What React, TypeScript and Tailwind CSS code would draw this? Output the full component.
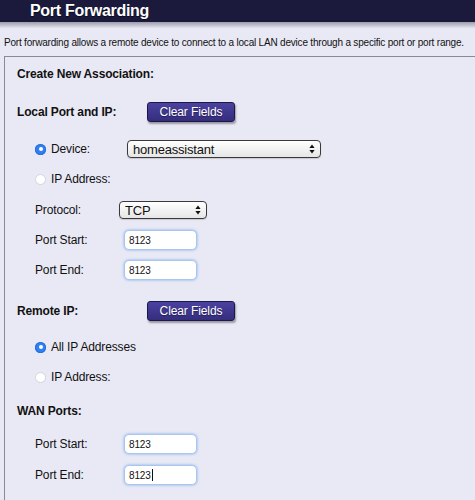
import React from "react";

const font = { fontFamily: '"Liberation Sans", Arial, Helvetica, sans-serif' };

function Radio({ on }: { on?: boolean }) {
  return on ? (
    <span className="inline-flex h-[11px] w-[11px] items-center justify-center rounded-full bg-[#2f80f5] shadow-[inset_0_0_0_1px_#2a6fd6]">
      <span className="h-[4px] w-[4px] rounded-full bg-white" />
    </span>
  ) : (
    <span className="inline-block h-[11px] w-[11px] rounded-full border border-[#d4d4dc] bg-white" />
  );
}

function Arrows() {
  return (
    <svg width="6" height="10" viewBox="0 0 6 10" className="shrink-0">
      <path d="M3 0.5 L5.6 4 H0.4 Z" fill="#111" />
      <path d="M3 9.5 L5.6 6 H0.4 Z" fill="#111" />
    </svg>
  );
}

function Select({ text, w }: { text: string; w: string }) {
  return (
    <div
      className={`flex h-[18px] ${w} items-center justify-between rounded-[4px] border border-[#3a3a3a] bg-gradient-to-b from-white to-[#e6e6e6] pl-[5px] pr-[5px] text-[13px] leading-none tracking-[-0.2px] text-[#111] shadow-[0_1px_1px_rgba(0,0,0,0.15)]`}
    >
      <span>{text}</span>
      <Arrows />
    </div>
  );
}

function Input({ value, caret }: { value: string; caret?: boolean }) {
  return (
    <div className="flex h-[20px] w-[73px] items-center rounded-[5px] border border-[#a8c6ee] bg-white pl-[4px] text-[10px] text-[#111] shadow-[0_0_2px_1px_rgba(140,180,240,0.55)]">
      <span>{value}</span>
      {caret && <span className="ml-[1px] inline-block h-[12px] w-[1px] bg-[#111]" />}
    </div>
  );
}

function ClearBtn() {
  return (
    <div className="flex h-[20px] w-[88px] items-center justify-center rounded-[3px] border border-[#1d1848] bg-gradient-to-b from-[#4a42a0] to-[#352d7c] text-[12px] tracking-[-0.1px] text-white shadow-[1px_2px_2px_rgba(0,0,0,0.35)] [text-shadow:0_1px_1px_rgba(0,0,0,0.4)]">
      Clear Fields
    </div>
  );
}

export default function App() {
  return (
    <div className="h-[500px] w-[475px] overflow-hidden bg-[#e9e9f5] text-[#111]" style={font}>
      <div className="flex h-[22px] items-center bg-[#1b1a3d] pl-[30px]">
        <span className="text-[16px] font-bold leading-none tracking-[-0.3px] text-white [text-shadow:0_1px_1px_rgba(0,0,0,0.6)]">
          Port Forwarding
        </span>
      </div>
      <div className="h-[6px] bg-gradient-to-b from-[#9c9cab] to-[#e4e4f0]" />
      <div className="flex h-[28px] items-center whitespace-nowrap pl-[4px] text-[10px] tracking-[-0.2px]">
        Port forwarding allows a remote device to connect to a local LAN device through a specific port or port range.
      </div>
      <div className="ml-[4px] w-[490px] border border-[#8a8a94] pl-[12px] text-[12px] tracking-[-0.15px]">
        <div className="flex h-[34px] items-center font-bold">Create New Association:</div>
        <div className="flex h-[42px] items-center">
          <span className="w-[130px] font-bold">Local Port and IP:</span>
          <ClearBtn />
        </div>
        <div className="flex h-[32px] items-center pl-[18px]">
          <Radio on />
          <span className="ml-[5px] w-[76px]">Device:</span>
          <Select text="homeassistant" w="w-[194px]" />
        </div>
        <div className="flex h-[28px] items-center pl-[18px]">
          <Radio />
          <span className="ml-[5px]">IP Address:</span>
        </div>
        <div className="flex h-[34px] items-center pl-[18px]">
          <span className="w-[84px]">Protocol:</span>
          <Select text="TCP" w="w-[88px]" />
        </div>
        <div className="flex h-[26px] items-center pl-[18px]">
          <span className="w-[89px]">Port Start:</span>
          <Input value="8123" />
        </div>
        <div className="flex h-[34px] items-center pl-[18px]">
          <span className="w-[89px]">Port End:</span>
          <Input value="8123" />
        </div>
        <div className="flex h-[48px] items-center">
          <span className="w-[130px] font-bold">Remote IP:</span>
          <ClearBtn />
        </div>
        <div className="flex h-[24px] items-center pl-[18px]">
          <Radio on />
          <span className="ml-[5px]">All IP Addresses</span>
        </div>
        <div className="flex h-[36px] items-center pl-[18px]">
          <Radio />
          <span className="ml-[5px]">IP Address:</span>
        </div>
        <div className="flex h-[32px] items-center font-bold">WAN Ports:</div>
        <div className="flex h-[34px] items-center pl-[18px]">
          <span className="w-[89px]">Port Start:</span>
          <Input value="8123" />
        </div>
        <div className="flex h-[28px] items-center pl-[18px]">
          <span className="w-[89px]">Port End:</span>
          <Input value="8123" caret />
        </div>
        <div className="h-[20px]" />
      </div>
    </div>
  );
}
